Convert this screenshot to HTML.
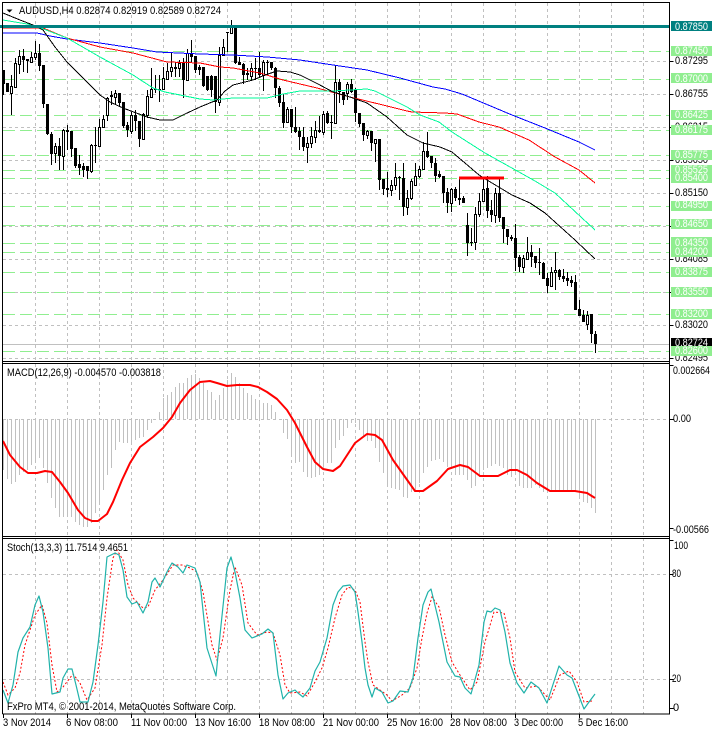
<!DOCTYPE html>
<html><head><meta charset="utf-8"><style>
html,body{margin:0;padding:0;background:#fff;width:712px;height:732px;overflow:hidden}
svg{display:block}
text{font-family:"Liberation Sans",sans-serif;font-size:11px;fill:#000}
.w{fill:#fff}
</style></head><body>
<svg width="712" height="732" viewBox="0 0 712 732" xmlns="http://www.w3.org/2000/svg">
<rect width="712" height="732" fill="#fff"/>
<!-- grid main -->
<g stroke="#c0c0c0" fill="none" stroke-dasharray="3 3" shape-rendering="crispEdges">
<path d="M35.5 3V361M67.5 3V361M99.5 3V361M131.5 3V361M163.5 3V361M195.5 3V361M227.5 3V361M259.5 3V361M291.5 3V361M323.5 3V361M355.5 3V361M387.5 3V361M419.5 3V361M451.5 3V361M483.5 3V361M515.5 3V361M547.5 3V361M579.5 3V361M611.5 3V361M643.5 3V361"/>
<path d="M3 61.5H669M3 94.5H669M3 127.5H669M3 160.5H669M3 193.5H669M3 226.5H669M3 259.5H669M3 292.5H669M3 325.5H669M3 358.5H669"/>
<path d="M35.5 364V536M67.5 364V536M99.5 364V536M131.5 364V536M163.5 364V536M195.5 364V536M227.5 364V536M259.5 364V536M291.5 364V536M323.5 364V536M355.5 364V536M387.5 364V536M419.5 364V536M451.5 364V536M483.5 364V536M515.5 364V536M547.5 364V536M579.5 364V536M611.5 364V536M643.5 364V536"/>
<path d="M3 419.5H669"/>
<path d="M35.5 538V714M67.5 538V714M99.5 538V714M131.5 538V714M163.5 538V714M195.5 538V714M227.5 538V714M259.5 538V714M291.5 538V714M323.5 538V714M355.5 538V714M387.5 538V714M419.5 538V714M451.5 538V714M483.5 538V714M515.5 538V714M547.5 538V714M579.5 538V714M611.5 538V714M643.5 538V714"/>
<path d="M3 574.5H669M3 679.5H669"/>
</g>
<!-- green levels -->
<path fill="none" stroke="#90ee90" stroke-dasharray="12 5" shape-rendering="crispEdges" d="M3 51.5H670M3 79.5H670M3 115.5H670M3 130.5H670M3 155.5H670M3 170.5H670M3 178.5H670M3 206.5H670M3 225.5H670M3 243.5H670M3 252.5H670M3 272.5H670M3 292.5H670M3 314.5H670M3 351.5H670"/>
<path stroke="#c0c0c0" fill="none" shape-rendering="crispEdges" d="M3 344.5H670"/>
<!-- wicks -->
<path fill="none" stroke="#000" shape-rendering="crispEdges" d="M3.5 70V95M7.5 83V92M11.5 75V115M15.5 58V87M19.5 50V74M23.5 49V72M27.5 59V73M31.5 52V63M35.5 41V60M39.5 44V71M43.5 65V108M47.5 104V135M51.5 132V165M55.5 143V163M59.5 138V170M63.5 129V170M67.5 125V150M71.5 131V157M75.5 148V168M79.5 155V175M83.5 163V177M87.5 166V179M91.5 144V173M95.5 127V163M99.5 119V147M103.5 115V127M107.5 97V121M111.5 91V105M115.5 90V105M119.5 93V107M123.5 102V128M127.5 122V137M131.5 112V134M135.5 110V131M139.5 121V147M143.5 113V140M147.5 90V118M151.5 68V98M155.5 75V93M159.5 75V102M163.5 67V90M167.5 63V79M171.5 52V77M175.5 62V77M179.5 60V77M183.5 58V98M187.5 49V81M191.5 40V62M195.5 56V73M199.5 65V75M203.5 67V87M207.5 76V91M211.5 75V97M215.5 76V113M219.5 47V106M223.5 39V55M227.5 33V52M231.5 20V33M235.5 25V64M239.5 57V65M243.5 63V84M247.5 68V80M251.5 63V80M255.5 58V80M259.5 52V78M263.5 60V91M267.5 60V75M271.5 62V70M275.5 67V98M279.5 86V107M283.5 94V128M287.5 107V123M291.5 109V133M295.5 107V133M299.5 127V150M303.5 127V151M307.5 137V163M311.5 127V148M315.5 121V143M319.5 116V133M323.5 111V135M327.5 111V124M331.5 115V139M335.5 66V124M339.5 79V103M343.5 92V105M347.5 82V100M351.5 79V93M355.5 88V122M359.5 113V127M363.5 123V141M367.5 130V139M371.5 131V151M375.5 139V162M379.5 139V190M383.5 179V195M387.5 172V197M391.5 180V196M395.5 163V190M399.5 176V200M403.5 163V216M407.5 190V215M411.5 179V200M415.5 163V185M419.5 166V178M423.5 142V170M427.5 132V158M431.5 156V168M435.5 158V182M439.5 171V178M443.5 176V203M447.5 188V213M451.5 188V212M455.5 187V201M459.5 178V205M463.5 196V203M467.5 213V256M471.5 228V246M475.5 207V250M479.5 193V217M483.5 178V202M487.5 176V218M491.5 200V222M495.5 188V223M499.5 178V222M503.5 217V243M507.5 229V245M511.5 235V241M515.5 224V271M519.5 255V272M523.5 255V273M527.5 237V260M531.5 245V267M535.5 256V268M539.5 248V275M543.5 262V279M547.5 273V293M551.5 267V287M555.5 252V290M559.5 269V280M563.5 269V282M567.5 272V286M571.5 276V287M575.5 275V310M579.5 300V316M583.5 310V322M587.5 311V330M591.5 314V343M595.5 331V353"/>
<!-- black bodies -->
<path fill="none" stroke="#000" stroke-width="3" shape-rendering="crispEdges" d="M3.5 70V84M7.5 83V92M23.5 56V60M27.5 59V61M39.5 53V66M43.5 65V104M47.5 104V134M51.5 134V154M59.5 146V156M67.5 130V132M71.5 131V149M75.5 148V166M79.5 164V168M83.5 166V170M87.5 166V171M95.5 145V146M111.5 95V97M119.5 93V103M123.5 102V126M127.5 125V130M135.5 115V121M139.5 121V139M155.5 89V90M159.5 89V90M175.5 67V69M183.5 63V80M191.5 53V57M195.5 56V70M199.5 67V70M203.5 67V86M207.5 76V90M211.5 76V90M215.5 76V102M227.5 32V33M235.5 26V63M239.5 62V65M243.5 64V75M247.5 73V75M255.5 68V69M259.5 68V75M267.5 62V63M271.5 62V68M275.5 68V88M279.5 88V103M283.5 102V123M291.5 109V127M295.5 127V132M299.5 131V137M303.5 137V147M319.5 130V132M327.5 113V123M331.5 122V123M339.5 82V92M343.5 92V100M351.5 84V92M355.5 90V113M359.5 113V124M363.5 123V135M371.5 131V143M379.5 139V180M383.5 179V189M387.5 188V190M399.5 177V178M403.5 178V207M427.5 151V157M431.5 156V163M435.5 163V176M439.5 174V177M443.5 176V193M447.5 192V203M455.5 189V198M459.5 198V200M463.5 198V203M467.5 225V243M471.5 242V243M487.5 188V211M491.5 210V215M499.5 193V218M503.5 217V229M507.5 229V237M511.5 237V239M515.5 238V258M519.5 257V267M531.5 252V257M535.5 256V263M539.5 262V263M543.5 263V279M547.5 278V286M559.5 270V277M563.5 276V279M567.5 278V281M571.5 280V283M575.5 282V310M579.5 309V316M583.5 315V322M591.5 314V334M595.5 334V344"/>
<!-- white bodies -->
<path fill="#fff" stroke="#000" shape-rendering="crispEdges" d="M10.5 86.5h2V93.5h-2zM14.5 63.5h2V87.5h-2zM18.5 56.5h2V64.5h-2zM30.5 57.5h2V62.5h-2zM34.5 53.5h2V57.5h-2zM54.5 146.5h2V153.5h-2zM62.5 130.5h2V156.5h-2zM90.5 145.5h2V171.5h-2zM98.5 127.5h2V146.5h-2zM102.5 119.5h2V127.5h-2zM106.5 98.5h2V115.5h-2zM114.5 93.5h2V97.5h-2zM130.5 115.5h2V131.5h-2zM142.5 114.5h2V139.5h-2zM146.5 96.5h2V115.5h-2zM150.5 89.5h2V97.5h-2zM162.5 78.5h2V89.5h-2zM166.5 71.5h2V79.5h-2zM170.5 67.5h2V71.5h-2zM178.5 63.5h2V68.5h-2zM186.5 53.5h2V80.5h-2zM218.5 55.5h2V102.5h-2zM222.5 47.5h2V55.5h-2zM230.5 26.5h2V33.5h-2zM250.5 68.5h2V76.5h-2zM262.5 62.5h2V75.5h-2zM286.5 109.5h2V122.5h-2zM306.5 143.5h2V147.5h-2zM310.5 136.5h2V143.5h-2zM314.5 130.5h2V137.5h-2zM322.5 114.5h2V132.5h-2zM334.5 82.5h2V123.5h-2zM346.5 84.5h2V93.5h-2zM366.5 131.5h2V135.5h-2zM374.5 139.5h2V143.5h-2zM390.5 185.5h2V190.5h-2zM394.5 177.5h2V185.5h-2zM406.5 198.5h2V207.5h-2zM410.5 181.5h2V198.5h-2zM414.5 176.5h2V185.5h-2zM418.5 169.5h2V176.5h-2zM422.5 151.5h2V169.5h-2zM450.5 189.5h2V203.5h-2zM474.5 214.5h2V242.5h-2zM478.5 201.5h2V214.5h-2zM482.5 189.5h2V201.5h-2zM494.5 193.5h2V215.5h-2zM522.5 258.5h2V267.5h-2zM526.5 252.5h2V259.5h-2zM550.5 272.5h2V286.5h-2zM554.5 270.5h2V272.5h-2zM586.5 315.5h2V324.5h-2z"/>
<!-- moving averages -->
<g fill="none" stroke-linejoin="round" shape-rendering="crispEdges">
<polyline stroke="#0000ff" points="3,33 37,33 50,36 67,39 100,43 133,48 157,52 200,54 233,55 267,57 300,60 333,65 367,70 400,78 433,87 445,89 462,94 512,115 545,128 579,142 595,150"/>
<polyline stroke="#ff0000" points="3,28 43,28 67,38 100,47 133,53 167,62 200,63 220,67 233,68 260,73 283,80 317,88 350,97 383,105 407,111 412,112 445,113 457,114 479,122 499,127 529,140 555,157 579,170 595,183"/>
<polyline stroke="#00fa9a" points="3,20 33,25 67,38 100,57 133,75 153,88 165,92 180,95 200,99 213,100 233,98 267,98 283,94 300,91 333,91 367,89 375,91 387,97 407,107 420,115 439,122 452,132 485,153 519,172 535,181 555,193 595,230"/>
<polyline stroke="#000" points="3,13 20,20 33,25 43,30 55,47 67,62 85,80 100,95 110,102 123,108 147,117 160,120 173,120 185,114 200,107 217,100 225,91 233,85 253,80 265,75 277,71 290,72 300,75 318,84 333,92 350,97 367,103 377,110 387,117 397,126 407,135 423,143 440,147 452,152 465,163 479,175 487,180 512,195 530,203 545,213 555,222 575,240 595,259"/>
</g>
<path d="M0 26.5H670" stroke="#008080" stroke-width="3" shape-rendering="crispEdges"/>
<path d="M459 178H504" stroke="#ff0000" stroke-width="3" shape-rendering="crispEdges"/>
<!-- MACD histogram -->
<path fill="none" stroke="#c0c0c0" shape-rendering="crispEdges" d="M3.5 419V470M7.5 419V479M11.5 419V484M15.5 419V482M19.5 419V475M23.5 419V472M27.5 419V470M31.5 419V465M35.5 419V460M39.5 419V458M43.5 419V468M47.5 419V483M51.5 419V498M55.5 419V508M59.5 419V517M63.5 419V517M67.5 419V517M71.5 419V517M75.5 419V522M79.5 419V525M83.5 419V527M87.5 419V527M91.5 419V523M95.5 419V513M99.5 419V503M103.5 419V490M107.5 419V475M111.5 419V468M115.5 419V450M119.5 419V442M123.5 419V443M127.5 419V443M131.5 419V443M135.5 419V440M139.5 419V438M143.5 419V437M147.5 419V430M151.5 419V423M155.5 419V420M159.5 419V412M163.5 419V398M167.5 419V395M171.5 419V392M175.5 419V387M179.5 419V383M183.5 419V383M187.5 419V378M191.5 419V375M195.5 419V374M199.5 419V378M203.5 419V383M207.5 419V390M211.5 419V392M215.5 419V400M219.5 419V395M223.5 419V388M227.5 419V380M231.5 419V373M235.5 419V377M239.5 419V383M243.5 419V388M247.5 419V393M251.5 419V395M255.5 419V399M259.5 419V402M263.5 419V403M267.5 419V403M271.5 419V405M275.5 419V412M279.5 419V420M283.5 419V433M287.5 419V439M291.5 419V457M295.5 419V463M299.5 419V462M303.5 419V472M307.5 419V477M311.5 419V478M315.5 419V477M319.5 419V475M323.5 419V468M327.5 419V463M331.5 419V463M335.5 419V448M339.5 419V440M343.5 419V436M347.5 419V428M351.5 419V423M355.5 419V423M359.5 419V430M363.5 419V437M367.5 419V441M371.5 419V441M375.5 419V448M379.5 419V462M383.5 419V473M387.5 419V485M391.5 419V488M395.5 419V489M399.5 419V490M403.5 419V497M407.5 419V498M411.5 419V492M415.5 419V490M419.5 419V483M423.5 419V473M427.5 419V467M431.5 419V461M435.5 419V460M439.5 419V459M443.5 419V462M447.5 419V467M451.5 419V468M455.5 419V475M459.5 419V475M463.5 419V475M467.5 419V480M471.5 419V488M475.5 419V486M479.5 419V477M483.5 419V470M487.5 419V468M491.5 419V466M495.5 419V464M499.5 419V466M503.5 419V468M507.5 419V475M511.5 419V477M515.5 419V475M519.5 419V486M523.5 419V488M527.5 419V488M531.5 419V488M535.5 419V485M539.5 419V488M543.5 419V492M547.5 419V493M551.5 419V491M555.5 419V491M559.5 419V491M563.5 419V492M567.5 419V491M571.5 419V492M575.5 419V491M579.5 419V497M583.5 419V502M587.5 419V503M591.5 419V508M595.5 419V513"/>
<!-- MACD signal -->
<polyline fill="none" stroke="#ff0000" stroke-width="2" stroke-linejoin="round" points="3,441 10,455 20,467 28,473 37,473 45,471 52,472 60,482 68,493 78,510 85,518 92,521 98,521 107,514 113,502 122,480 130,463 140,447 153,437 163,428 172,417 180,403 190,390 200,382 210,381 217,383 227,386 237,385 250,385 258,387 267,392 277,399 287,410 295,423 300,433 307,447 315,462 323,469 333,471 340,466 355,443 367,434 375,435 382,440 393,460 415,491 423,491 437,481 448,469 460,465 468,467 480,476 498,476 510,470 517,470 527,475 537,483 550,491 575,491 587,493 595,498"/>
<!-- Stoch -->
<polyline fill="none" stroke="#ff0000" stroke-dasharray="2 2" points="3,682 8,695 15,688 20,673 25,645 30,630 35,615 42,605 47,623 52,665 57,692 63,687 73,674 80,683 87,700 95,688 102,645 107,598 113,558 117,550 123,560 128,585 133,598 143,608 148,607 155,590 163,580 173,565 182,565 190,568 197,572 203,592 212,645 217,660 223,638 230,590 235,567 242,585 248,623 257,635 267,632 273,633 280,655 285,685 290,693 300,692 307,696 315,682 322,668 328,648 335,618 342,595 348,587 355,590 360,602 365,642 368,662 373,685 380,690 387,695 392,701 402,695 410,688 417,668 422,638 427,613 432,597 439,607 445,635 452,662 460,675 470,690 477,682 485,642 494,612 504,613 510,638 515,672 525,688 537,686 550,700 560,675 569,671 577,682 584,702 592,701"/>
<polyline fill="none" stroke="#20b2aa" stroke-width="1.2" stroke-linejoin="round" points="3,690 8,703 13,685 18,652 23,638 30,627 35,605 39,596 43,612 48,648 52,694 60,692 63,678 68,669 72,669 76,685 80,702 88,702 93,682 98,645 103,602 107,557 115,553 119,555 123,570 127,597 132,604 137,602 143,613 148,602 152,582 155,578 160,587 167,572 172,563 178,567 183,573 187,565 195,568 200,582 207,648 216,676 220,635 227,568 231,557 235,572 240,598 245,630 252,638 262,634 268,629 273,633 278,675 283,699 288,693 295,690 298,693 303,697 310,688 315,671 320,662 327,638 333,605 338,592 343,586 350,585 355,592 358,612 362,642 365,668 368,685 372,697 375,688 382,692 388,703 393,701 400,691 408,692 413,678 418,638 423,605 428,592 431,589 439,622 447,662 455,676 460,677 465,688 471,694 479,665 484,622 487,611 491,612 495,608 500,610 505,632 510,663 517,683 524,693 531,682 539,688 547,703 559,666 567,675 572,678 584,709 589,702 595,694"/>
<!-- frame -->
<g fill="none" stroke="#000" shape-rendering="crispEdges">
<path d="M2.5 714V2.5H669.5V714H2.5"/>
<path d="M2.5 361.5H669.5M2.5 363.5H669.5M2.5 536.5H669.5M2.5 538.5H669.5"/>
<path d="M669.5 61.5h4M669.5 94.5h4M669.5 127.5h4M669.5 160.5h4M669.5 193.5h4M669.5 226.5h4M669.5 259.5h4M669.5 292.5h4M669.5 325.5h4M669.5 358.5h4M669.5 365.5h4M669.5 419.5h4M669.5 528.5h4M669.5 540.5h4M669.5 574.5h4M669.5 679.5h4M669.5 708.5h4"/>
<path d="M3.5 714v4M67.5 714v4M131.5 714v4M195.5 714v4M259.5 714v4M323.5 714v4M387.5 714v4M451.5 714v4M515.5 714v4M579.5 714v4"/>
</g>
<!-- header -->
<path d="M6.5 9.5h6l-3 3z" fill="#000"/>
<text x="19" y="14" textLength="202" lengthAdjust="spacingAndGlyphs">AUDUSD,H4  0.82874 0.82919 0.82589 0.82724</text>
<text x="7" y="376" textLength="154" lengthAdjust="spacingAndGlyphs">MACD(12,26,9) -0.004570 -0.003818</text>
<text x="7" y="551" textLength="121" lengthAdjust="spacingAndGlyphs">Stoch(13,3,3) 11.7514 9.4651</text>
<text x="7" y="710" textLength="229" lengthAdjust="spacingAndGlyphs">FxPro MT4, © 2001-2014, MetaQuotes Software Corp.</text>
<!-- price axis black labels -->
<g>
<text x="675" y="64" textLength="33" lengthAdjust="spacingAndGlyphs">0.87295</text>
<text x="675" y="97" textLength="33" lengthAdjust="spacingAndGlyphs">0.86755</text>
<text x="675" y="130" textLength="33" lengthAdjust="spacingAndGlyphs">0.86215</text>
<text x="675" y="163" textLength="33" lengthAdjust="spacingAndGlyphs">0.85650</text>
<text x="675" y="196" textLength="33" lengthAdjust="spacingAndGlyphs">0.85150</text>
<text x="675" y="229" textLength="33" lengthAdjust="spacingAndGlyphs">0.84615</text>
<text x="675" y="262" textLength="33" lengthAdjust="spacingAndGlyphs">0.84085</text>
<text x="675" y="328" textLength="33" lengthAdjust="spacingAndGlyphs">0.83020</text>
<text x="675" y="361" textLength="33" lengthAdjust="spacingAndGlyphs">0.82495</text>
</g>
<!-- price axis boxes -->
<rect x="671" y="338" width="41" height="10" fill="#000"/>
<text class="w" x="675" y="346" textLength="33" lengthAdjust="spacingAndGlyphs">0.82724</text>
<rect x="671" y="21" width="41" height="10" fill="#008080"/>
<text class="w" x="675" y="30" textLength="33" lengthAdjust="spacingAndGlyphs">0.87850</text>
<g fill="#90ee90">
<rect x="671" y="46" width="41" height="10"/>
<rect x="671" y="73" width="41" height="10"/>
<rect x="671" y="110" width="41" height="10"/>
<rect x="671" y="125" width="41" height="10"/>
<rect x="671" y="150" width="41" height="10"/>
<rect x="671" y="165" width="41" height="9"/>
<rect x="671" y="173" width="41" height="10"/>
<rect x="671" y="201" width="41" height="10"/>
<rect x="671" y="219" width="41" height="10"/>
<rect x="671" y="237" width="41" height="11"/>
<rect x="671" y="247" width="41" height="10"/>
<rect x="671" y="267" width="41" height="10"/>
<rect x="671" y="287" width="41" height="10"/>
<rect x="671" y="309" width="41" height="10"/>
<rect x="671" y="346" width="41" height="10"/>
</g>
<g>
<text class="w" x="675" y="54" textLength="33" lengthAdjust="spacingAndGlyphs">0.87450</text>
<text class="w" x="675" y="82" textLength="33" lengthAdjust="spacingAndGlyphs">0.87000</text>
<text class="w" x="675" y="118" textLength="33" lengthAdjust="spacingAndGlyphs">0.86425</text>
<text class="w" x="675" y="133" textLength="33" lengthAdjust="spacingAndGlyphs">0.86175</text>
<text class="w" x="675" y="158" textLength="33" lengthAdjust="spacingAndGlyphs">0.85775</text>
<text class="w" x="675" y="173" textLength="33" lengthAdjust="spacingAndGlyphs">0.85525</text>
<text class="w" x="675" y="181" textLength="33" lengthAdjust="spacingAndGlyphs">0.85400</text>
<text class="w" x="675" y="208" textLength="33" lengthAdjust="spacingAndGlyphs">0.84950</text>
<text class="w" x="675" y="227" textLength="33" lengthAdjust="spacingAndGlyphs">0.84650</text>
<text class="w" x="675" y="246" textLength="33" lengthAdjust="spacingAndGlyphs">0.84350</text>
<text class="w" x="675" y="255" textLength="33" lengthAdjust="spacingAndGlyphs">0.84200</text>
<text class="w" x="675" y="275" textLength="33" lengthAdjust="spacingAndGlyphs">0.83875</text>
<text class="w" x="675" y="295" textLength="33" lengthAdjust="spacingAndGlyphs">0.83550</text>
<text class="w" x="675" y="317" textLength="33" lengthAdjust="spacingAndGlyphs">0.83200</text>
<text class="w" x="675" y="354" textLength="33" lengthAdjust="spacingAndGlyphs">0.82600</text>
</g>
<!-- indicator axis -->
<text x="673" y="374" textLength="37" lengthAdjust="spacingAndGlyphs">0.002664</text>
<text x="673" y="422" textLength="18" lengthAdjust="spacingAndGlyphs">0.00</text>
<text x="673" y="533" textLength="36" lengthAdjust="spacingAndGlyphs">-0.00566</text>
<text x="674" y="549" textLength="14" lengthAdjust="spacingAndGlyphs">100</text>
<text x="672" y="577" textLength="9" lengthAdjust="spacingAndGlyphs">80</text>
<text x="672" y="682" textLength="9" lengthAdjust="spacingAndGlyphs">20</text>
<text x="673" y="711">0</text>
<!-- time axis -->
<text x="3" y="726" textLength="48" lengthAdjust="spacingAndGlyphs">3 Nov 2014</text>
<text x="66" y="726" textLength="52" lengthAdjust="spacingAndGlyphs">6 Nov 08:00</text>
<text x="131" y="726" textLength="56" lengthAdjust="spacingAndGlyphs">11 Nov 00:00</text>
<text x="195" y="726" textLength="56" lengthAdjust="spacingAndGlyphs">13 Nov 16:00</text>
<text x="259" y="726" textLength="56" lengthAdjust="spacingAndGlyphs">18 Nov 08:00</text>
<text x="323" y="726" textLength="56" lengthAdjust="spacingAndGlyphs">21 Nov 00:00</text>
<text x="387" y="726" textLength="56" lengthAdjust="spacingAndGlyphs">25 Nov 16:00</text>
<text x="450" y="726" textLength="57" lengthAdjust="spacingAndGlyphs">28 Nov 08:00</text>
<text x="514" y="726" textLength="49" lengthAdjust="spacingAndGlyphs">3 Dec 00:00</text>
<text x="578" y="726" textLength="50" lengthAdjust="spacingAndGlyphs">5 Dec 16:00</text>
</svg>
</body></html>
